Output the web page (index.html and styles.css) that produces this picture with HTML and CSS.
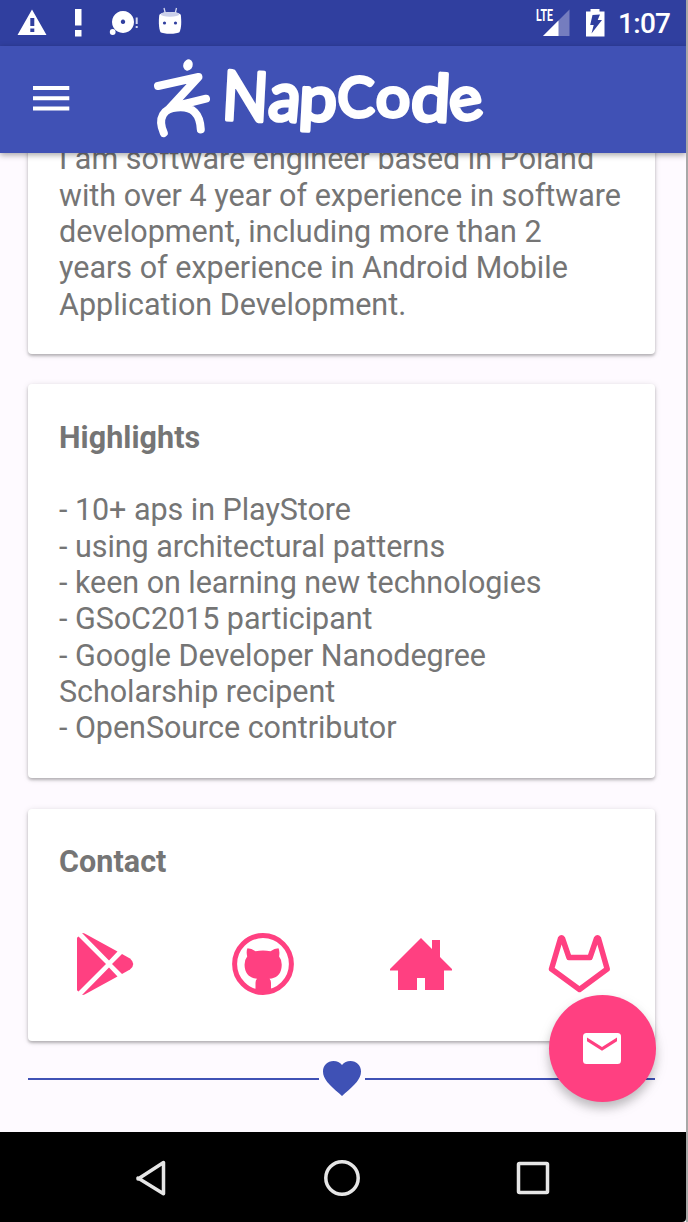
FILE: index.html
```html
<!DOCTYPE html>
<html lang="en">
<head>
<meta charset="utf-8">
<title>NapCode</title>
<link rel="stylesheet" href="styles.css">
</head>
<body>
<div class="device">
  <header class="status">
    <svg class="status-left" viewBox="0 0 200 46" width="200" height="46">
      <path fill="#fff" fill-rule="evenodd" d="M32 9.5 46.500 35H17.500zM30.300 18v8h4v-8zm0 10.500v3.500h4v-3.500z"/>
      <path fill="#fff" d="M75 9h6.500v16.500H75zM75 30h6.500v6.500H75z"/>
      <path fill="#fff" fill-rule="evenodd" d="M123 11a11 11 0 1 0 .01 0zM123 19.600a2.200 2.200 0 1 1-.01 0z"/>
      <circle cx="112.700" cy="32" r="2.900" fill="#fff"/>
      <path fill="#d5d9ef" d="M135.700 17.500h2v6.500h-2zM135.700 26h2v2h-2z"/>
      <path fill="none" stroke="#d5d9ef" stroke-width="1.300" d="m164 8 1.500 6M176.500 8 175 14"/>
      <path fill="#fff" d="M159.300 15c2-4 20-4 21.500 0 .8 6 .6 13-1.200 17-2.500 2.400-16.500 2.400-19.200 0-1.700-4-1.900-11-1.100-17z"/>
      <ellipse cx="170" cy="14.300" rx="9.300" ry="2.400" fill="#cbd0ea"/>
      <circle cx="164.500" cy="23" r="1.600" fill="#303f9f"/><circle cx="175.500" cy="23" r="1.600" fill="#303f9f"/>
    </svg>
    <div class="status-right">
      <svg viewBox="0 0 76 46" width="76" height="46">
        <text class="lte" x="1" y="21" textLength="17" lengthAdjust="spacingAndGlyphs">LTE</text>
        <path fill="#757dbf" d="M34.500 9.500V36H8z"/>
        <path fill="#fff" d="M23.500 20.500V36H8z"/>
        <path fill="#fff" d="M55.500 9h9v2.500h5V36.500H51V11.500h4.500z"/>
        <path fill="#303f9f" d="m57.500 15 7.500-.5-2.300 5.500h4.300l-10.500 13.500 2.200-8.500h-3.500z"/>
      </svg>
      <span class="clock">1:07</span>
    </div>
  </header>
  <div class="toolbar">
    <svg class="menu-icon" viewBox="0 0 37 25" width="37" height="25"><path fill="#fff" d="M0 0h36.300v4H0zM0 10.300h36.300v4H0zM0 20.600h36.300v4H0z"/></svg>
    <svg class="brand" viewBox="150 46 340 107" width="340" height="107">
      <ellipse cx="188" cy="65" rx="4.700" ry="5.700" fill="#fff" transform="rotate(18 188 65)"/>
      <path class="runner" d="M158 86 198.500 77 169 109M172 107 206 98.700M163.800 133C157 118 164 108 177 107.500 193 106 200 114 200.800 129.500" />
      <g class="wordmark">
        <text x="222.500" y="120.500" transform="rotate(3 246 96)" textLength="46" lengthAdjust="spacingAndGlyphs" font-size="68">N</text>
        <text x="268" y="120.500" textLength="32" lengthAdjust="spacingAndGlyphs" font-size="69" transform="rotate(5 283 110)">a</text>
        <text x="298.500" y="120.500" textLength="38" lengthAdjust="spacingAndGlyphs" font-size="63" transform="rotate(3 318 110)">p</text>
        <text x="337.500" y="117" textLength="37" lengthAdjust="spacingAndGlyphs" font-size="57">C</text>
        <text x="376" y="117" textLength="34" lengthAdjust="spacingAndGlyphs" font-size="56">o</text>
        <text x="411" y="121" textLength="39" lengthAdjust="spacingAndGlyphs" font-size="65" transform="rotate(3 430 105)">d</text>
        <text x="449.500" y="119.500" textLength="33" lengthAdjust="spacingAndGlyphs" font-size="61" transform="rotate(-10 466 105)">e</text>
      </g>
    </svg>
  </div>
  <main class="content">
    <section class="card about">
      <p>I am software engineer based in Poland<br>with over 4 year of experience in software<br>development, including more than 2<br>years of experience in Android Mobile<br>Application Development.</p>
    </section>
    <section class="card highlights">
      <h2>Highlights</h2>
      <p>- 10+ aps in PlayStore<br>- using architectural patterns<br>- keen on learning new technologies<br>- GSoC2015 participant<br>- Google Developer Nanodegree<br>Scholarship recipent<br>- OpenSource contributor</p>
    </section>
    <section class="card contact">
      <h2>Contact</h2>
      <div class="links">
        <svg viewBox="0 0 62 62" width="62" height="62"><g fill="#ff4081"><path d="M4.500 3.500 32 31 4.500 58.500Q3 58 3 56.500V5.500Q3 4 4.500 3.500z"/><path d="M8 0Q10 0 12 1.300L43.500 18.500 35 27.500z"/><path d="M8 62Q10 62 12 60.700L43.500 43.500 35 34.500z"/><path d="m48 21 8 4.500q6.500 5.500 0 11L48 41l-10-10z"/></g></svg>
        <svg viewBox="0 0 62 62" width="62" height="62"><circle cx="31" cy="31" r="28.400" fill="none" stroke="#ff4081" stroke-width="5"/><path fill="#ff4081" d="M15.500 15.200q4 0 8 3 7.500-1.600 15 0 4-3 8-3 1.500 3 .6 8.200 3.400 4 2.400 11.300C48.500 42 44 45 37.500 45.700q1.500 1.500 1.500 4V59H23.500V49.700q0-2.500 1.500-4C18.500 45 14 42 12.800 34.700q-1-7.300 2.400-11.300-1.200-5.200.3-8.200z"/></svg>
        <svg viewBox="0 0 62 62" width="62" height="62"><path fill="#ff4081" d="M0 37.500V36L31 5 42 16V7h8v17L62 36v1.500h-8V57H35V45h-8v12H8V37.500z"/></svg>
        <svg viewBox="0 0 62 62" width="62" height="62"><path fill="none" stroke="#ff4081" stroke-width="5.500" stroke-linejoin="round" d="M12.500 5.500Q13.500 4 14.500 5.500L21 24.500h21L48.500 5.500Q49.500 4 50.500 5.500L59.200 36 31.500 56.500 3.500 36z"/></svg>
      </div>
    </section>
    <div class="divider">
      <span class="rule"></span>
      <svg viewBox="0 0 38 36" width="38" height="36"><path fill="#3f51b5" d="m19 35-3-2.700C6 23.500 0 18 0 10.500 0 4.500 4.600 0 10.500 0 14 0 17 1.500 19 4c2-2.500 5-4 8.500-4C33.400 0 38 4.500 38 10.500c0 7.500-6 13-16 21.800z"/></svg>
      <span class="rule"></span>
    </div>
  </main>
  <div class="fab"><svg viewBox="0 0 38 31" width="38" height="31"><rect width="38" height="31" rx="3.500" fill="#fff"/><path fill="#ff4081" d="M4 4.500 19 14 34 4.500v3.800L19 17.700 4 8.300z"/></svg></div>
  <nav class="navbar">
    <svg viewBox="0 0 40 40" width="40" height="40"><path d="M7 21 32.500 4.500v31.300L7 20z"/></svg>
    <svg viewBox="0 0 40 40" width="40" height="40"><circle cx="20" cy="20" r="16.200"/></svg>
    <svg viewBox="0 0 40 40" width="40" height="40"><rect x="5.500" y="5.500" width="29" height="29" rx="1"/></svg>
  </nav>
</div>
</body>
</html>
```
FILE: styles.css
```css
* { box-sizing: border-box; }
body {
  margin: 0;
  background: #a8a8a8;
  font-family: Roboto, "Liberation Sans", sans-serif;
}
.device {
  position: relative;
  display: flex;
  flex-direction: column;
  width: 686px;
  height: 1222px;
  overflow: hidden;
  background: #fefaff;
}
.status {
  flex: none;
  display: flex;
  justify-content: space-between;
  height: 46px;
  background: #303f9f;
}
.status-right {
  display: flex;
  width: 151px;
}
.lte {
  fill: #fff;
  font: 700 16px Roboto, sans-serif;
}
.clock {
  margin-left: 7px;
  line-height: 48px;
  font-size: 28px;
  font-weight: 500;
  color: #fff;
  letter-spacing: -0.7px;
}
.toolbar {
  position: relative;
  z-index: 2;
  flex: none;
  display: flex;
  align-items: center;
  height: 107px;
  padding-left: 33px;
  background: #4051b5;
  box-shadow: 0 2px 6px rgba(0, 0, 0, 0.35);
}
.menu-icon { margin-top: -2px; }
.brand { margin-left: 80px; }
.runner {
  fill: none;
  stroke: #fff;
  stroke-width: 8;
  stroke-linecap: round;
  stroke-linejoin: round;
}
.wordmark {
  fill: #fff;
  stroke: #fff;
  stroke-width: 4;
  stroke-linejoin: round;
  font-family: Lato, sans-serif;
  font-weight: 400;
}
.content {
  flex: 1;
  min-height: 0;
  overflow: hidden;
  padding: 0 31px 0 28px;
}
.card {
  margin-bottom: 30.5px;
  padding: 35.5px 31px 0;
  border-radius: 4px;
  background: #fff;
  box-shadow: 0 2px 3px rgba(0, 0, 0, 0.24), 0 1px 6px rgba(0, 0, 0, 0.12);
  color: #757575;
  font-size: 30.5px;
  line-height: 36.36px;
}
.card p, .card h2 { margin: 0; font-size: inherit; white-space: nowrap; }
.card h2 { font-weight: 700; letter-spacing: 0.05px; }
.about {
  height: 213.5px;
  margin-top: -13px;
  padding-top: 1.3px;
}
.highlights { height: 394px; }
.highlights p { margin-top: 36.36px; letter-spacing: -0.04px; }
.contact { height: 232px; margin-bottom: 20px; padding-top: 35px; }
.links {
  display: flex;
  justify-content: space-between;
  width: 536px;
  margin: 53px 0 0 15px;
}
.divider {
  display: flex;
  align-items: center;
  gap: 4px;
  height: 36px;
}
.rule { flex: 1; height: 2px; background: #4051b5; }
.fab {
  position: absolute;
  left: 548.5px;
  top: 994.5px;
  display: flex;
  align-items: center;
  justify-content: center;
  width: 107px;
  height: 107px;
  border-radius: 50%;
  background: #ff4081;
  box-shadow: 0 6px 10px rgba(0, 0, 0, 0.2), 0 6px 16px rgba(0, 0, 0, 0.08);
}
.navbar {
  position: relative;
  flex: none;
  display: flex;
  justify-content: space-between;
  align-items: center;
  height: 90px;
  padding: 2px 133px 0 131px;
  background: #000;
  border-radius: 0 0 4px 0;
}
.navbar svg {
  fill: none;
  stroke: #e6e6e6;
  stroke-width: 3.5;
  stroke-linejoin: round;
}
```
